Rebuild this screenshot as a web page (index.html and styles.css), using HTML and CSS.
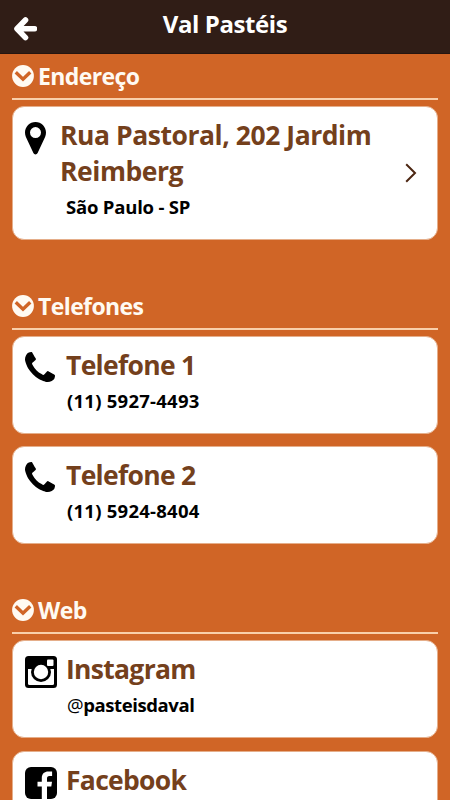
FILE: index.html
```html
<!DOCTYPE html>
<html lang="pt-BR">
<head>
    <meta charset="UTF-8">
    <meta name="viewport" content="width=device-width, initial-scale=1">
    <title>Val Pastéis</title>
    <link rel="stylesheet" href="styles.css">
</head>
<body>

    <svg class="sprite" width="0" height="0">
        <symbol id="chevron-circle" viewBox="0 0 22 22">
            <circle cx="11" cy="11" r="10.9" fill="#fffaf2"/>
            <path d="M5 8.400L11 14.200l6-5.800" fill="none" stroke="#d06526" stroke-width="3.400" stroke-linecap="square"/>
        </symbol>
        <symbol id="phone" viewBox="0 0 1408 1408">
            <path d="M1408 1112q0 27-10 70.500t-21 68.500q-21 50-122 106-94 51-186 51-27 0-53-3.500t-57.500-12.500-47-14.500-55.500-20.500-49-18q-98-35-175-83-127-79-264-216t-216-264q-48-77-83-175-3-9-18-49t-20.500-55.500-14.500-47-12.500-57.500-3.500-53q0-92 51-186 56-101 106-122 25-11 68.500-21t70.500-10q14 0 21 3 18 6 53 76 11 19 30 54t35 63.500 31 53.500q3 4 17.500 25t21.500 35.500 7 28.500q0 20-28.500 50t-62 55-62 53-28.500 46q0 9 5 22.500t8.500 20.500 14 24 11.500 19q76 137 174 235t235 174q2 1 19 11.500t24 14 20.500 8.500 22.500 5q18 0 46-28.500t53-62 55-62 50-28.500q14 0 28.500 7t35.500 21.500 25 17.500q25 15 53.500 31t63.500 35 54 30q70 35 76 53 3 7 3 21z"/>
        </symbol>
    </svg>

    <header class="topbar">
        <a class="back" href="#" aria-label="Voltar">
            <svg width="24" height="26" viewBox="0 0 24 26">
                <path d="M12.500 4L4 12.800l8.500 8.800M4.500 12.800H21.500" fill="none" stroke="#fff" stroke-width="5.600" stroke-linecap="round" stroke-linejoin="round"/>
            </svg>
        </a>
        <h1>Val Pastéis</h1>
    </header>

    <main>
        <section>
            <h2><svg width="22" height="22"><use href="#chevron-circle"/></svg>Endereço</h2>
            <a class="card address" href="#">
                <svg class="icon" width="21" height="33" viewBox="0 0 21 33">
                    <path fill-rule="evenodd" d="M10.500 0C4.700 0 0 4.700 0 10.500c0 1.700.3 3.100.9 4.400l7.500 16.200c.8 1.900 3.400 1.900 4.200 0l7.500-16.200c.6-1.300.9-2.700.9-4.400C21 4.700 16.300 0 10.500 0zm0 5.100a5.500 5.500 0 1 1 0 11 5.500 5.500 0 0 1 0-11z"/>
                </svg>
                <div class="info">
                    <h3>Rua Pastoral, 202 Jardim Reimberg</h3>
                    <p>São Paulo - SP</p>
                </div>
                <svg class="arrow" width="12" height="20" viewBox="0 0 12 20">
                    <path d="M1.200 1.300L10 10l-8.800 8.700" fill="none" stroke="#4c2612" stroke-width="2"/>
                </svg>
            </a>
        </section>

        <section>
            <h2><svg width="22" height="22"><use href="#chevron-circle"/></svg>Telefones</h2>
            <a class="card" href="#">
                <svg class="icon" width="30" height="30"><use href="#phone"/></svg>
                <div class="info">
                    <h3>Telefone 1</h3>
                    <p class="number">(11) 5927-4493</p>
                </div>
            </a>
            <a class="card" href="#">
                <svg class="icon" width="30" height="30"><use href="#phone"/></svg>
                <div class="info">
                    <h3>Telefone 2</h3>
                    <p class="number">(11) 5924-8404</p>
                </div>
            </a>
        </section>

        <section>
            <h2><svg width="22" height="22"><use href="#chevron-circle"/></svg>Web</h2>
            <a class="card" href="#">
                <svg class="icon" width="32" height="32" viewBox="0 0 32 32">
                    <rect width="32" height="32" rx="3.500"/>
                    <path d="M3 13h26v14.500a1.500 1.500 0 0 1-1.500 1.500h-23A1.500 1.500 0 0 1 3 27.500z" fill="#fff"/>
                    <circle cx="16" cy="16" r="10"/>
                    <circle cx="16" cy="16" r="7.200" fill="#fff"/>
                    <rect x="22" y="3.500" width="6.500" height="6.500" rx="1" fill="#fff"/>
                </svg>
                <div class="info">
                    <h3>Instagram</h3>
                    <p><span class="at">@</span>pasteisdaval</p>
                </div>
            </a>
            <a class="card" href="#">
                <svg class="icon" width="32" height="32" viewBox="0 0 32 32">
                    <rect width="32" height="32" rx="6"/>
                    <path d="M16.800 32V19.500h-4.300v-4.800h4.300V11c0-4.500 2.800-6.600 6.500-6.600 1.800 0 3.300.1 3.800.2v4.500h-2.600c-2 0-2.500 1-2.500 2.400v3.200h5l-.7 4.800H22V32z" fill="#fff"/>
                </svg>
                <div class="info">
                    <h3>Facebook</h3>
                </div>
            </a>
        </section>
    </main>

</body>
</html>
```
FILE: styles.css
```css
* {
    box-sizing: border-box;
}

body {
    margin: 0;
    height: 800px;
    overflow: hidden;
    font-family: "Open Sans", "Noto Sans", sans-serif;
    background-color: #d06526;
}

h1, h2, h3, p {
    margin: 0;
}

a {
    color: inherit;
    text-decoration: none;
}

.sprite {
    display: block;
}

.topbar {
    display: grid;
    grid-template-columns: 40px 1fr 40px;
    height: 54px;
    background-color: #301d16;
    border-bottom: 1px solid #251510;
    color: #fff;
}

.back {
    padding: 16px 0 0 13px;
}

.back svg {
    display: block;
}

h1 {
    font-size: 24px;
    line-height: 48px;
    font-weight: 700;
    letter-spacing: -0.4px;
    text-align: center;
}

main {
    padding: 0 12px;
}

section {
    margin-bottom: 44px;
}

h2 {
    display: flex;
    align-items: center;
    gap: 4px;
    height: 46px;
    margin-bottom: 6px;
    border-bottom: 2px solid #f9cfaa;
    color: #fffaf2;
    font-size: 23px;
    line-height: 44px;
    font-weight: 700;
    letter-spacing: -0.6px;
}

.card {
    display: flex;
    min-height: 98px;
    margin-bottom: 12.4px;
    padding: 10px 12px 0;
    border: 1px solid #e5ae8a;
    border-radius: 12px;
    background-color: #fff;
}

.icon {
    flex: none;
    margin-top: 5px;
}

.info {
    width: 358px;
    margin-left: auto;
}

h3 {
    margin-left: -1px;
    color: #74401c;
    font-size: 26.5px;
    line-height: 36px;
    font-weight: 700;
    letter-spacing: -0.7px;
}

p {
    color: #000;
    font-size: 18.5px;
    line-height: 36px;
    font-weight: 700;
    letter-spacing: -0.4px;
}

.number {
    letter-spacing: 0.25px;
}

.at {
    font-weight: 400;
}

.address {
    min-height: 134px;
}

.address .info {
    width: 334px;
    margin-left: 16px;
}

.address h3 {
    margin-left: -2px;
    letter-spacing: -0.45px;
}

.address p {
    margin-left: 4px;
    letter-spacing: -0.2px;
}

.arrow {
    margin-top: 46px;
    margin-left: 9px;
}
```
